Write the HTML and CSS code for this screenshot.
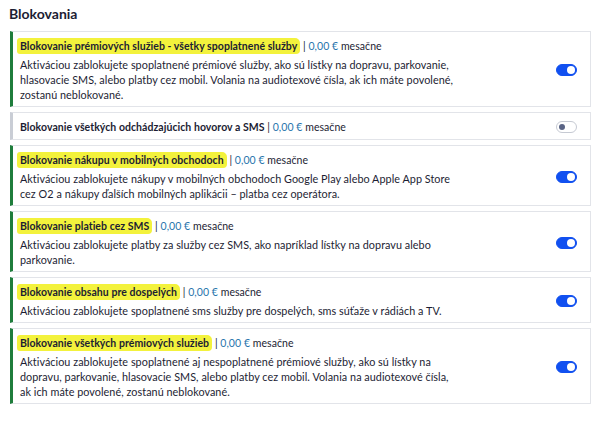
FILE: index.html
```html
<!DOCTYPE html>
<html lang="sk">
<head>
<meta charset="utf-8">
<title>Blokovania</title>
<link rel="stylesheet" href="styles.css">
</head>
<body>
<main class="page">
  <h2 class="heading">Blokovania</h2>
  <ul class="list">
    <li class="item item--active">
      <div class="item-text">
        <p class="item-title"><mark class="hl"><strong>Blokovanie prémiových služieb - všetky spoplatnené služby</strong></mark> | <span class="price">0,00 €</span> mesačne</p>
        <p class="item-desc">Aktiváciou zablokujete spoplatnené prémiové služby, ako sú lístky na dopravu, parkovanie, hlasovacie SMS, alebo platby cez mobil. Volania na audiotexové čísla, ak ich máte povolené, zostanú neblokované.</p>
      </div>
      <span class="toggle toggle--on"></span>
    </li>
    <li class="item">
      <div class="item-text">
        <p class="item-title"><strong>Blokovanie všetkých odchádzajúcich hovorov a SMS</strong> | <span class="price">0,00 €</span> mesačne</p>
      </div>
      <span class="toggle"></span>
    </li>
    <li class="item item--active">
      <div class="item-text">
        <p class="item-title"><mark class="hl"><strong>Blokovanie nákupu v mobilných obchodoch</strong></mark> | <span class="price">0,00 €</span> mesačne</p>
        <p class="item-desc">Aktiváciou zablokujete nákupy v mobilných obchodoch Google Play alebo Apple App Store cez O2 a nákupy ďalších mobilných aplikácii – platba cez operátora.</p>
      </div>
      <span class="toggle toggle--on"></span>
    </li>
    <li class="item item--active">
      <div class="item-text">
        <p class="item-title"><mark class="hl"><strong>Blokovanie platieb cez SMS</strong></mark> | <span class="price">0,00 €</span> mesačne</p>
        <p class="item-desc">Aktiváciou zablokujete platby za služby cez SMS, ako napríklad lístky na dopravu alebo parkovanie.</p>
      </div>
      <span class="toggle toggle--on"></span>
    </li>
    <li class="item item--active">
      <div class="item-text">
        <p class="item-title"><mark class="hl"><strong>Blokovanie obsahu pre dospelých</strong></mark> | <span class="price">0,00 €</span> mesačne</p>
        <p class="item-desc">Aktiváciou zablokujete spoplatnené sms služby pre dospelých, sms súťaže v rádiách a TV.</p>
      </div>
      <span class="toggle toggle--on"></span>
    </li>
    <li class="item item--active">
      <div class="item-text">
        <p class="item-title"><mark class="hl"><strong>Blokovanie všetkých prémiových služieb</strong></mark> | <span class="price">0,00 €</span> mesačne</p>
        <p class="item-desc">Aktiváciou zablokujete spoplatnené aj nespoplatnené prémiové služby, ako sú lístky na dopravu, parkovanie, hlasovacie SMS, alebo platby cez mobil. Volania na audiotexové čísla, ak ich máte povolené, zostanú neblokované.</p>
      </div>
      <span class="toggle toggle--on"></span>
    </li>
  </ul>
</main>
</body>
</html>
```

FILE: styles.css
```css
* {
  box-sizing: border-box;
}

body {
  margin: 0;
  background: #ffffff;
  color: #1c1d33;
  font-family: Lato, "Noto Sans", sans-serif;
}

.page {
  padding: 0 9px 0 10px;
}

.heading {
  margin: 5px 0 8px -1px;
  font-size: 14px;
  line-height: 18px;
  font-weight: 700;
}

.list {
  list-style: none;
  margin: 0;
  padding: 0;
  display: flex;
  flex-direction: column;
  gap: 5px;
}

/* one blocking option card */
.item {
  display: flex;
  align-items: center;
  border: 1px solid #e2e4e9;
  border-left: 3px solid #c9cdd5;
  padding: 6px 13px 4px 7px;
  background: #ffffff;
}

.item--active {
  border-left-color: #1f7d3c;
}

.item-text {
  flex: 1;
  min-width: 0;
}

.item-title {
  margin: 0;
  font-size: 10.5px;
  line-height: 16px;
  font-weight: 400;
  letter-spacing: 0.05px;
  white-space: nowrap;
}

.item-title strong {
  font-weight: 700;
}

.hl {
  background: #f3f23c;
  color: inherit;
  padding: 2px 3px;
  margin-left: -3px;
  border-radius: 3px 5px 4px 3px;
}

.price {
  color: #2a76ad;
}

.item-desc {
  margin: 3px 0 0;
  max-width: 438px;
  font-size: 10.8px;
  line-height: 15px;
  letter-spacing: 0.05px;
}

/* switch */
.toggle {
  position: relative;
  flex: none;
  width: 21px;
  height: 12px;
  border-radius: 6px;
  border: 1px solid #c6cad3;
  background: #ffffff;
}

.toggle::after {
  content: "";
  position: absolute;
  top: 2px;
  left: 2px;
  width: 6px;
  height: 6px;
  border-radius: 50%;
  background: #5a6485;
}

.toggle--on {
  border-color: #1150f0;
  background: #1150f0;
}

.toggle--on::after {
  left: auto;
  right: 1px;
  top: 1px;
  width: 8px;
  height: 8px;
  background: #ffffff;
}
```
